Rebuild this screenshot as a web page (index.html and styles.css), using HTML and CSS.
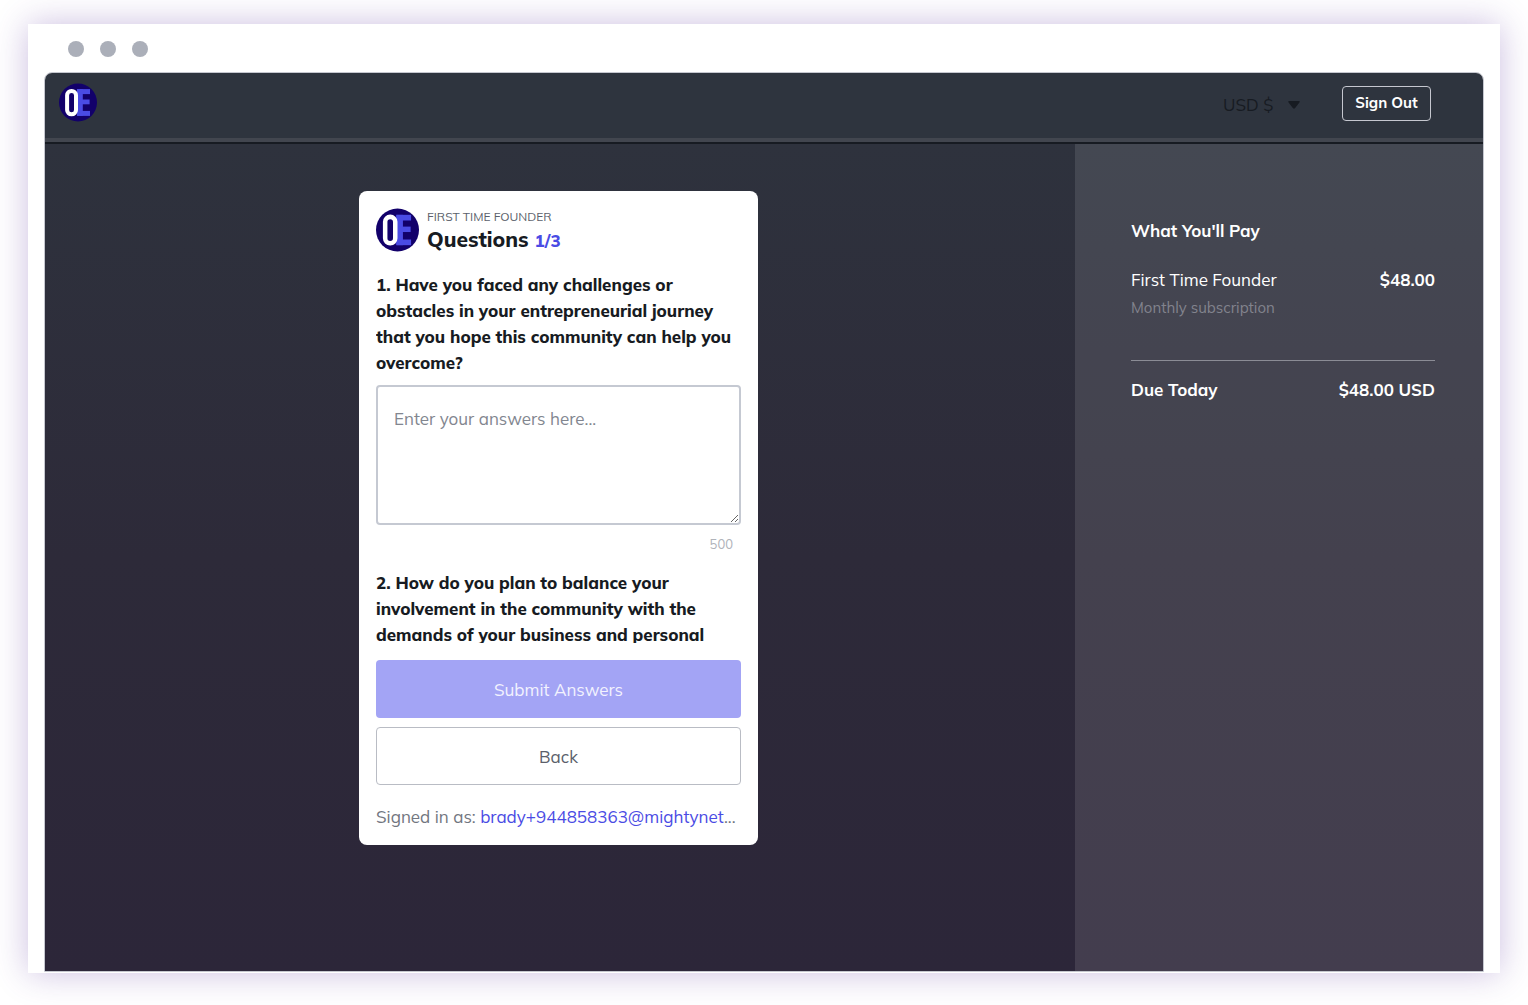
FILE: index.html
```html
<!DOCTYPE html>
<html lang="en">
<head>
<meta charset="utf-8">
<meta name="viewport" content="width=device-width, initial-scale=1">
<title>First Time Founder – Questions</title>
<link rel="stylesheet" href="styles.css">
</head>
<body>
<svg class="defs" aria-hidden="true">
  <symbol id="logo" viewBox="0 0 38 38">
    <circle cx="19" cy="19" r="19" fill="#12006a"/>
    <rect x="18" y="5.600" width="5.800" height="26.800" fill="#4a4be4"/>
    <rect x="18" y="5.600" width="13" height="5" fill="#4a4be4"/>
    <rect x="18" y="16" width="12.600" height="4.800" fill="#4a4be4"/>
    <rect x="18" y="27.400" width="13" height="5" fill="#4a4be4"/>
    <rect x="8.100" y="7.400" width="8.900" height="23.400" rx="4.400" fill="none" stroke="#fff" stroke-width="4"/>
  </symbol>
</svg>
<div class="window">
  <div class="titlebar"><span class="dot"></span><span class="dot"></span><span class="dot"></span></div>
  <div class="viewport">
    <header class="header">
      <a class="header-logo" href="#" aria-label="Home"><svg class="logo-small"><use href="#logo"/></svg></a>
      <div class="currency">
        <select class="currency-select" aria-label="Currency"><option>USD $</option></select>
        <svg class="caret" viewBox="0 0 12 8" aria-hidden="true"><path d="M1 0h10q1.300 .4.400 1.500L7 7.200q-1 .9-2 0L.6 1.500Q-.3.400 1 0z"/></svg>
      </div>
      <button class="sign-out" type="button">Sign Out</button>
    </header>
    <div class="content">
      <main class="main">
        <form class="card">
          <div class="card-head">
            <svg class="logo-large" aria-hidden="true"><use href="#logo"/></svg>
            <div>
              <p class="eyebrow">First Time Founder</p>
              <h1 class="title">Questions <span class="step">1/3</span></h1>
            </div>
          </div>
          <div class="questions">
            <label class="question" for="q1">1. Have you faced any challenges or obstacles in your entrepreneurial journey that you hope this community can help you overcome?</label>
            <textarea class="answer" id="q1" placeholder="Enter your answers here..."></textarea>
            <p class="counter">500</p>
            <p class="question">2. How do you plan to balance your involvement in the community with the demands of your business and personal</p>
          </div>
          <button class="btn btn-primary" type="submit">Submit Answers</button>
          <button class="btn btn-outline" type="button">Back</button>
          <p class="signed-in">Signed in as: <a href="#">brady+944858363@mightynet</a>...</p>
        </form>
      </main>
      <aside class="summary">
        <h2 class="summary-title">What You'll Pay</h2>
        <div class="row"><span>First Time Founder</span><strong>$48.00</strong></div>
        <p class="period">Monthly subscription</p>
        <div class="row row-total"><strong>Due Today</strong><strong>$48.00 USD</strong></div>
      </aside>
    </div>
  </div>
</div>
</body>
</html>
```
FILE: styles.css
```css
* { box-sizing: border-box; }

body {
  margin: 0;
  min-height: 100vh;
  display: flex;
  padding: 24px 28px 32px;
  background: #fff;
  color: #171b22;
  font: 17px/26px Mulish, Lato, "Open Sans", sans-serif;
}

p, h1, h2 { margin: 0; }
a { color: #4a4be4; text-decoration: none; }
button, select, textarea { font: inherit; }
.defs { position: absolute; width: 0; height: 0; }

.window {
  flex: 1;
  display: flex;
  flex-direction: column;
  padding: 0 16px 1px;
  background: #fff;
  box-shadow: 0 0 32px rgba(92, 52, 160, .32);
}

.titlebar {
  display: flex;
  align-items: center;
  gap: 16px;
  height: 48px;
  padding: 2px 24px 0;
}
.dot { width: 16px; height: 16px; border-radius: 50%; background: #abafb9; }

.viewport {
  flex: 1;
  display: flex;
  flex-direction: column;
  overflow: hidden;
  border: 1px solid #c5c7cf;
  border-radius: 8px 8px 0 0;
}

.header {
  display: flex;
  align-items: flex-start;
  height: 71px;
  padding: 10px 52px 0 14px;
  background: #2e343e;
  border-bottom: 2px solid #171b22;
  box-shadow: inset 0 -4px #42464f;
}
.header-logo { display: flex; margin-right: auto; }
.logo-small { width: 38px; height: 39px; }

.currency { display: flex; align-items: center; margin: 9px 42px 0 0; }
.currency-select {
  width: 65px;
  padding: 0;
  border: 0;
  background: none;
  color: #171b22;
  appearance: none;
}
.caret { width: 12px; height: 8px; fill: #171b22; }

.sign-out {
  width: 89px;
  height: 35px;
  margin-top: 3px;
  padding: 0 0 2px;
  border: 1px solid #c5c7cf;
  border-radius: 4px;
  background: none;
  color: #fff;
  font-size: 15px;
  font-weight: 700;
}

.content {
  flex: 1;
  display: flex;
  background: linear-gradient(#2e323d, #2d2a39 50%, #2c2639);
}
.main { flex: 1; padding: 47px 20px 47px 17px; }

.card {
  width: 100%;
  max-width: 399px;
  margin: 0 auto;
  padding: 17px 17px 15px;
  border-radius: 8px;
  background: #fff;
}
.card-head { display: flex; align-items: flex-start; gap: 8px; height: 44px; }
.logo-large { width: 43px; height: 44px; }
.eyebrow { color: #5b5f6b; font-size: 12px; line-height: 18px; text-transform: uppercase; }
.title { font-size: 21px; line-height: 26px; font-weight: 800; }
.step { color: #4a4be4; font-size: 17px; font-weight: 800; }

.questions {
  height: 371px;
  margin: 20px 0 17px;
  overflow-y: auto;
  scrollbar-width: none;
}
.question { display: block; font-weight: 800; }
.answer {
  display: block;
  width: 100%;
  height: 140px;
  margin-top: 9px;
  padding: 19px 16px;
  border: 2px solid #c5c9d2;
  border-radius: 4px;
  background: #fff;
  resize: vertical;
}
.answer::placeholder { color: #82868f; }
.counter {
  padding: 9px 8px 16px;
  color: #b0b3ba;
  font-size: 13px;
  line-height: 20px;
  text-align: right;
}

.btn { display: block; width: 100%; height: 58px; padding: 2px 0 0; border-radius: 4px; }
.btn-primary { margin-bottom: 9px; border: 0; background: #a3a4f5; color: #f2f2fe; }
.btn-outline { border: 1px solid #b9bcc4; background: #fff; color: #5b5f6b; }
.signed-in { margin-top: 19px; color: #727680; white-space: nowrap; }

.summary {
  width: 408px;
  padding: 74px 48px 48px 56px;
  background: rgba(255, 255, 255, .11);
  color: #fff;
}
.summary-title { font-size: 17px; line-height: 26px; font-weight: 700; }
.row { display: flex; justify-content: space-between; margin-top: 23px; }
.period { margin-top: 2px; color: #82838d; font-size: 15px; }
.row-total { margin-top: 39px; padding-top: 16px; border-top: 1px solid #8b8c95; }
```
